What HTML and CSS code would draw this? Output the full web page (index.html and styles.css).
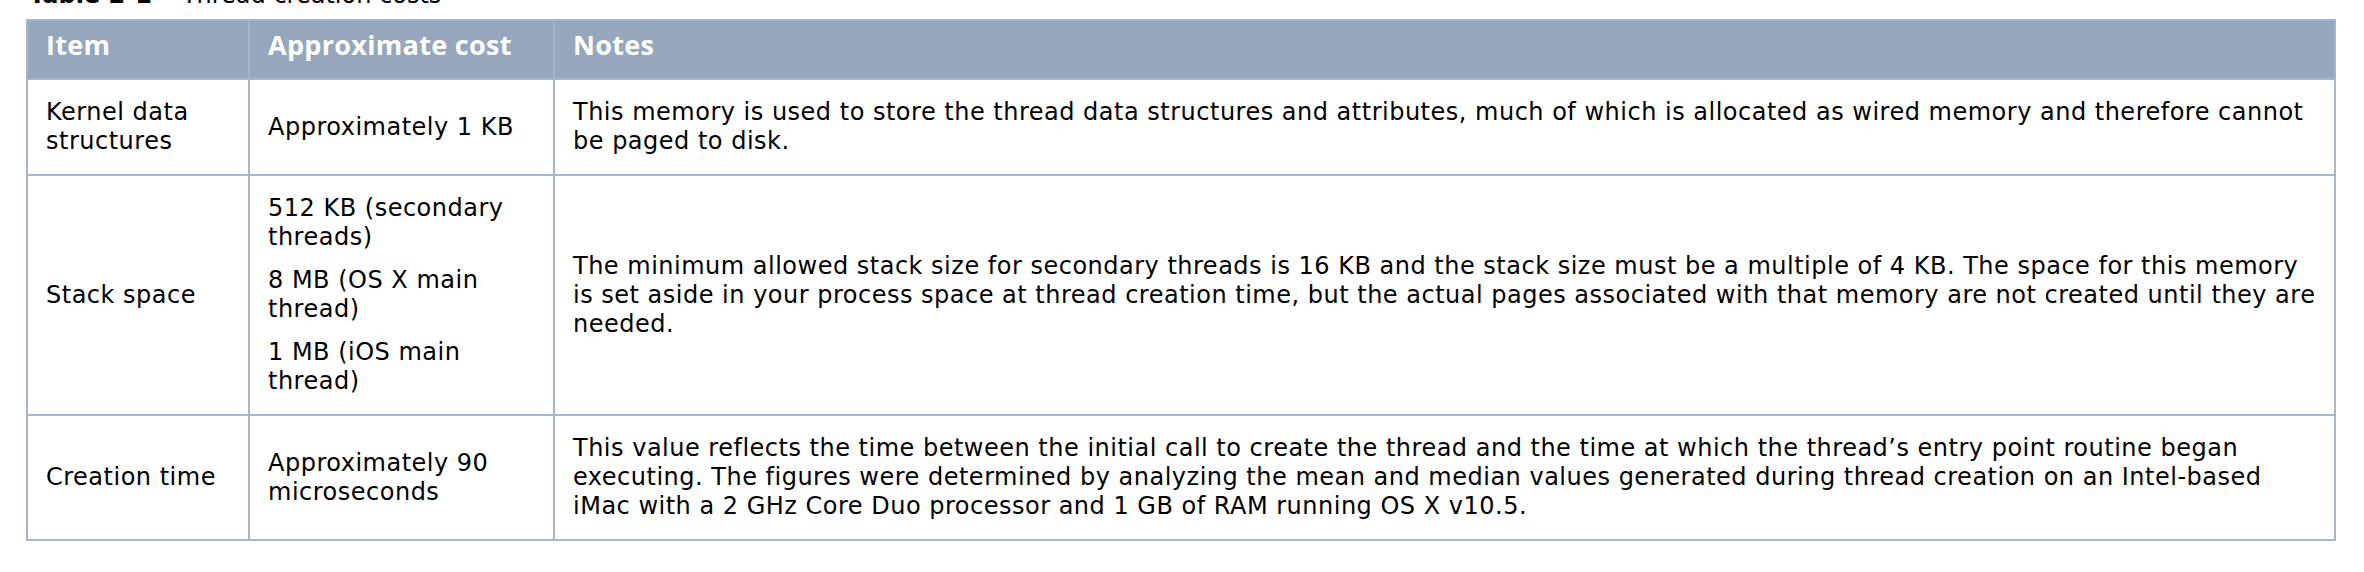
FILE: index.html
```html
<!DOCTYPE html>
<html lang="en">
<head>
<meta charset="utf-8">
<title>Thread creation costs</title>
<link rel="stylesheet" href="styles.css">
</head>
<body>
<p class="caption"><strong class="caption-label">Table 2-1</strong>Thread creation costs</p>
<div class="costs" role="table">
  <div class="cell head" role="columnheader">Item</div>
  <div class="cell head" role="columnheader">Approximate cost</div>
  <div class="cell head" role="columnheader">Notes</div>

  <div class="cell" role="cell"><p>Kernel data structures</p></div>
  <div class="cell" role="cell"><p>Approximately 1 KB</p></div>
  <div class="cell notes" role="cell"><p>This memory is used to store the thread data structures and attributes, much of which is allocated as wired memory and therefore cannot be paged to disk.</p></div>

  <div class="cell" role="cell"><p>Stack space</p></div>
  <div class="cell" role="cell"><p>512 KB (secondary threads)</p><p>8 MB (OS X main thread)</p><p>1 MB (iOS main thread)</p></div>
  <div class="cell notes" role="cell"><p>The minimum allowed stack size for secondary threads is 16 KB and the stack size must be a multiple of 4 KB. The space for this memory is set aside in your process space at thread creation time, but the actual pages associated with that memory are not created until they are needed.</p></div>

  <div class="cell" role="cell"><p>Creation time</p></div>
  <div class="cell" role="cell"><p>Approximately 90 microseconds</p></div>
  <div class="cell notes" role="cell"><p>This value reflects the time between the initial call to create the thread and the time at which the thread’s entry point routine began executing. The figures were determined by analyzing the mean and median values generated during thread creation on an Intel-based iMac with a 2 GHz Core Duo processor and 1 GB of RAM running OS X v10.5.</p></div>
</div>
</body>
</html>
```

FILE: styles.css
```css
html, body {
  margin: 0;
  background: #ffffff;
}

body {
  padding: 0 28px 0 26px;
  font-family: "DejaVu Sans", "Noto Sans", sans-serif;
  font-size: 24px;
  line-height: 29px;
  letter-spacing: 0.5px;
  color: #000000;
}

.caption {
  margin: -19px 0 9px 3px;
  white-space: nowrap;
  letter-spacing: 0;
}

.caption-label {
  font-weight: bold;
  margin-right: 30px;
}

.costs {
  display: grid;
  grid-template-columns: 222px 305px 1fr;
  border-left: 2px solid #a4b5cd;
  border-top: 2px solid #a4b5cd;
}

.cell {
  display: flex;
  flex-direction: column;
  justify-content: center;
  gap: 14px;
  padding: 18px;
  border-right: 2px solid #a4b5cd;
  border-bottom: 2px solid #a4b5cd;
}

.notes {
  padding-right: 14px;
}

.cell p {
  margin: 0;
}

.head {
  justify-content: flex-start;
  padding: 9px 18px 18px 18px;
  height: 30px;
  box-sizing: content-box;
  background: #96a6bc;
  color: #ffffff;
  font-family: "Open Sans", "DejaVu Sans", sans-serif;
  font-weight: 700;
  font-size: 27px;
  line-height: 30px;
  letter-spacing: 0.3px;
}
```
